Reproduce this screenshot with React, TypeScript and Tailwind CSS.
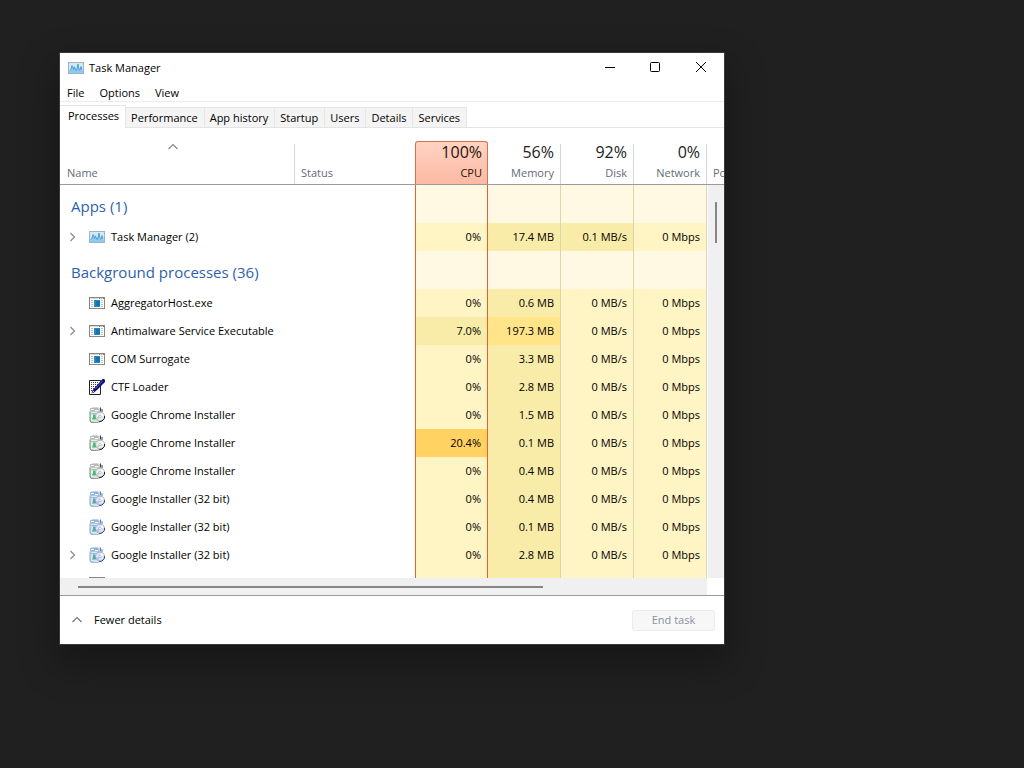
import { useState } from 'react'
import type { ReactNode } from 'react'
import clsx from 'clsx'

type IconName = 'taskmgr' | 'exe' | 'ctf' | 'chrome' | 'installer'

interface Process {
  name: string
  icon: IconName
  expandable?: boolean
  cpu: string
  memory: string
  disk: string
  network: string
}

const MENU = ['File', 'Options', 'View']
const TABS = ['Processes', 'Performance', 'App history', 'Startup', 'Users', 'Details', 'Services']

const APPS: Process[] = [
  { name: 'Task Manager (2)', icon: 'taskmgr', expandable: true, cpu: '0%', memory: '17.4 MB', disk: '0.1 MB/s', network: '0 Mbps' },
]

const BACKGROUND: Process[] = [
  { name: 'AggregatorHost.exe', icon: 'exe', cpu: '0%', memory: '0.6 MB', disk: '0 MB/s', network: '0 Mbps' },
  { name: 'Antimalware Service Executable', icon: 'exe', expandable: true, cpu: '7.0%', memory: '197.3 MB', disk: '0 MB/s', network: '0 Mbps' },
  { name: 'COM Surrogate', icon: 'exe', cpu: '0%', memory: '3.3 MB', disk: '0 MB/s', network: '0 Mbps' },
  { name: 'CTF Loader', icon: 'ctf', cpu: '0%', memory: '2.8 MB', disk: '0 MB/s', network: '0 Mbps' },
  { name: 'Google Chrome Installer', icon: 'chrome', cpu: '0%', memory: '1.5 MB', disk: '0 MB/s', network: '0 Mbps' },
  { name: 'Google Chrome Installer', icon: 'chrome', cpu: '20.4%', memory: '0.1 MB', disk: '0 MB/s', network: '0 Mbps' },
  { name: 'Google Chrome Installer', icon: 'chrome', cpu: '0%', memory: '0.4 MB', disk: '0 MB/s', network: '0 Mbps' },
  { name: 'Google Installer (32 bit)', icon: 'installer', cpu: '0%', memory: '0.4 MB', disk: '0 MB/s', network: '0 Mbps' },
  { name: 'Google Installer (32 bit)', icon: 'installer', cpu: '0%', memory: '0.1 MB', disk: '0 MB/s', network: '0 Mbps' },
  { name: 'Google Installer (32 bit)', icon: 'installer', expandable: true, cpu: '0%', memory: '2.8 MB', disk: '0 MB/s', network: '0 Mbps' },
]

function TaskManagerIcon() {
  return (
    <svg viewBox="0 0 16 16" className="size-4 shrink-0" aria-hidden="true">
      <rect x="0.5" y="2.5" width="15" height="11" fill="#d3e9f8" stroke="#9fb4c2" />
      <path d="M1 11 2.5 10 3.5 6 5 9 6 5 7.5 10 8.5 9 9.5 4 11 9 12 10 13 6 14 10 15 11V13H1Z" fill="#8ccaf0" />
      <path d="M1.5 10.5 3 9.5 4 5.5 5.5 9.5 6.5 7 8 10.5 9 9 10 4 11 9.5 12 10 13 6.5 14 10" fill="none" stroke="#4c9ad0" strokeWidth="0.9" />
    </svg>
  )
}

function ExeIcon() {
  return (
    <svg viewBox="0 0 16 16" className="size-4 shrink-0" shapeRendering="crispEdges" aria-hidden="true">
      <rect x="0" y="2" width="16" height="12" fill="#8b8780" />
      <rect x="1" y="3" width="14" height="10" fill="#ffffff" />
      <rect x="1" y="3" width="14" height="1" fill="#dedbd4" />
      <rect x="10" y="3" width="1" height="1" fill="#3c8fc4" />
      <rect x="12" y="3" width="1" height="1" fill="#d9a04a" />
      <rect x="14" y="3" width="1" height="1" fill="#d0603a" />
      <rect x="5" y="5" width="6" height="7" fill="#2a86c2" />
      <rect x="7" y="6" width="4" height="5" fill="#1473b4" />
      <path d="M2 5h2v1H2zM2 7h2v1H2zM2 9h2v1H2zM2 11h2v1H2zM12 5h2v1h-2zM12 7h2v1h-2zM12 9h2v1h-2zM12 11h2v1h-2z" fill="#b3c3cd" />
    </svg>
  )
}

function CtfIcon() {
  return (
    <svg viewBox="0 0 16 16" className="size-4 shrink-0" aria-hidden="true">
      <path d="M0.5 1.5H11.5V15.5H0.5Z" fill="#fff" stroke="#222" />
      <path
        d="M2 3h1v1H2zM4 3h1v1H4zM6 3h1v1H6zM8 3h1v1H8zM2 5h1v1H2zM4 5h1v1H4zM6 5h1v1H6zM8 5h1v1H8zM2 7h1v1H2zM4 7h1v1H4zM6 7h1v1H6zM2 9h1v1H2zM4 9h1v1H4zM2 11h1v1H2z"
        fill="#444"
      />
      <path d="M13.5 0H15L16 1V3L8 11 5 13.5 2.5 14.5 3.5 11.5 6 8.5Z" fill="#10107c" />
      <path d="M13.5 2 6.5 9.5" stroke="#4552b8" />
      <path d="M3.5 13.5 5 12" stroke="#ddd" />
    </svg>
  )
}

function SetupIcon({ tint }: { tint: 'green' | 'blue' }) {
  const green = tint === 'green'
  return (
    <svg viewBox="0 0 16 16" className="size-4 shrink-0" aria-hidden="true">
      <path d="M1 1 8 0 11 1V6L9 14 2 15 1 14Z" fill={green ? '#d5dcd8' : '#c2d8ee'} />
      <path d="M1 5H9V14H2Z" fill={green ? '#dff2e6' : '#d3e6f6'} />
      <path d="M1 4.5V13.5L2 15.3H9" fill="none" stroke={green ? '#59665e' : '#7892ad'} strokeWidth="0.8" />
      <path d="M1 1.5 4 0.5 9 0.7 10 4.5H1.5Z" fill={green ? '#b3bab6' : '#92b5da'} />
      <path d="M2 2.5H5M6 3.5H9" stroke="#fff" />
      <path d="M2 6.5H7" stroke={green ? '#8fb7a0' : '#8fb2d4'} strokeWidth="0.8" />
      <path d="M11.5 0.5V4.5M13 2V5" fill="none" stroke={green ? '#3b3f3d' : '#6682a6'} />
      <circle cx="11" cy="9.5" r="4.5" fill={green ? '#eceeed' : '#dbe3fa'} stroke={green ? '#8f9491' : '#8697bb'} strokeWidth="0.8" />
      <path d="M11 9.5 13 6 15 8.5Z" fill="#fff" />
      <path d="M11 9.5 7.5 11 9 13.3Z" fill={green ? '#c6ccc8' : '#a9b8ea'} />
      <circle cx="11" cy="9.5" r="1.2" fill="#fff" stroke="#9ba2ac" strokeWidth="0.6" />
      <path d="M15.5 9V11.5L13 14 9.5 15" fill="none" stroke={green ? '#222' : '#3f5577'} />
      <path d="M4 7.5H6V9.5L7.5 12.5H3L4 10Z" fill={green ? '#4bb87c' : '#58aa9c'} />
    </svg>
  )
}

const ICONS: Record<IconName, ReactNode> = {
  taskmgr: <TaskManagerIcon />,
  exe: <ExeIcon />,
  ctf: <CtfIcon />,
  chrome: <SetupIcon tint="green" />,
  installer: <SetupIcon tint="blue" />,
}

function Chevron({ up, className }: { up?: boolean; className?: string }) {
  return (
    <svg viewBox="0 0 10 10" className={clsx('size-[10px] shrink-0', className)} fill="none" stroke="currentColor" aria-hidden="true">
      <path d={up ? 'M0.5 7 5 2.5 9.5 7' : 'M2.5 1 6.5 5 2.5 9'} strokeWidth="1.2" />
    </svg>
  )
}

// Heat map shades, from idle to busy
function cpuHeat(value: string) {
  const n = parseFloat(value)
  if (n >= 20) return 'bg-[#ffd262]'
  if (n > 0) return 'bg-[#f9eca8]'
  return 'bg-[#fff4c4]'
}

function memoryHeat(value: string) {
  return parseFloat(value) >= 100 ? 'bg-[#ffe48a]' : 'bg-[#f9eca8]'
}

function diskHeat(value: string) {
  return parseFloat(value) > 0 ? 'bg-[#f9eca8]' : 'bg-[#fff4c4]'
}

const CPU_EDGE = 'border-l border-r border-l-[#e0622e] border-r-[#e0622e]'
const EDGE = 'border-r border-r-[#dcd5ae]'

function ProcessRow({ process }: { process: Process }) {
  return (
    <tr className="h-7">
      <td className="p-0">
        <div className="flex items-center pl-2">
          {process.expandable ? (
            <button type="button" aria-label={`Expand ${process.name}`} className="mr-[11px] text-[#888]">
              <Chevron />
            </button>
          ) : (
            <span className="w-[21px]" />
          )}
          {ICONS[process.icon]}
          <span className="ml-1.5 whitespace-nowrap">{process.name}</span>
        </div>
      </td>
      <td className="p-0" />
      <td className={clsx('p-0 pr-1.5 text-right', CPU_EDGE, cpuHeat(process.cpu))}>{process.cpu}</td>
      <td className={clsx('p-0 pr-1.5 text-right', EDGE, memoryHeat(process.memory))}>{process.memory}</td>
      <td className={clsx('p-0 pr-1.5 text-right', EDGE, diskHeat(process.disk))}>{process.disk}</td>
      <td className={clsx('p-0 pr-1.5 text-right bg-[#fff4c4]', EDGE)}>{process.network}</td>
      <td className="p-0" />
    </tr>
  )
}

function GroupRow({ title }: { title: string }) {
  return (
    <tr className="h-[38px]">
      <th scope="rowgroup" colSpan={2} className="p-0 pt-1 pl-[11px] text-left text-[15px] font-normal text-[#2f5fae]">
        {title}
      </th>
      <td className={clsx('bg-[#fff9e4]', CPU_EDGE)} />
      <td className={clsx('bg-[#fff9e4]', EDGE)} />
      <td className={clsx('bg-[#fff9e4]', EDGE)} />
      <td className={clsx('bg-[#fff9e4]', EDGE)} />
      <td className="p-0" />
    </tr>
  )
}

function UsageHeader({ value, label }: { value: string; label: string }) {
  return (
    <th scope="col" className="border-b border-[#9b9b9b] p-0 align-bottom font-normal">
      <div className="flex h-10 flex-col items-end border-r border-[#d5d5d5] pr-1.5">
        <span className="text-[16px] leading-4 text-[#222]">{value}</span>
        <span className="mt-[5px] leading-4">{label}</span>
      </div>
    </th>
  )
}

export default function App() {
  const [tab, setTab] = useState('Processes')

  return (
    <div className="h-screen bg-[#202020] pt-[53px] pr-[300px] pb-[124px] pl-[60px] font-['Open_Sans','Noto_Sans',sans-serif] text-[11px] leading-4 text-black">
      <main className="flex h-full flex-col overflow-hidden bg-white shadow-[0_0_0_1px_#383838,0_16px_36px_4px_rgba(0,0,0,0.3)]">
        <header className="flex h-[30px] shrink-0 items-center pl-2">
          <TaskManagerIcon />
          <h1 className="ml-[5px]">Task Manager</h1>
          <div className="ml-auto flex h-7 self-start text-black">
            <button type="button" aria-label="Minimize" className="grid w-11 place-items-center">
              <svg viewBox="0 0 12 12" className="size-3" stroke="currentColor"><path d="M1 6.5h10" /></svg>
            </button>
            <button type="button" aria-label="Maximize" className="grid w-[46px] place-items-center">
              <svg viewBox="0 0 12 12" className="size-3" fill="none" stroke="currentColor"><rect x="1.5" y="1.5" width="9" height="9" rx="1" /></svg>
            </button>
            <button type="button" aria-label="Close" className="grid w-[46px] place-items-center">
              <svg viewBox="0 0 12 12" className="size-3" stroke="currentColor"><path d="M1 1 11 11M11 1 1 11" /></svg>
            </button>
          </div>
        </header>

        <nav className="flex h-[19px] shrink-0 items-end gap-[15px] border-b border-[#ececec] pl-[7px]">
          {MENU.map((item) => (
            <button key={item} type="button">{item}</button>
          ))}
        </nav>

        <div role="tablist" className="flex h-[26px] shrink-0 items-end border-b border-[#e4e4e4]">
          {TABS.map((name) => (
            <button
              key={name}
              type="button"
              role="tab"
              aria-selected={tab === name}
              onClick={() => setTab(name)}
              className={clsx(
                'whitespace-nowrap border-t border-r border-[#e6e6e6] pr-1.5',
                tab === name ? '-mb-px h-[23px] bg-white pb-0.5 pl-2' : 'h-5 bg-[#f4f4f4] pl-[5px]'
              )}
            >
              {name}
            </button>
          ))}
        </div>

        <div className="relative min-h-0 flex-1 overflow-hidden">
          <table className="w-full table-fixed border-separate border-spacing-0">
            <colgroup>
              <col />
              <col className="w-[120px]" />
              <col className="w-[73px]" />
              <col className="w-[73px]" />
              <col className="w-[73px]" />
              <col className="w-[73px]" />
              <col className="w-[17px]" />
            </colgroup>
            <thead>
              <tr className="h-[57px] text-[#646b78]">
                <th scope="col" aria-sort="ascending" className="border-b border-[#9b9b9b] p-0 align-bottom font-normal">
                  <div className="flex h-10 flex-col border-r border-[#d5d5d5]">
                    <Chevron up className="-mt-0.5 mr-2 self-center text-[#888]" />
                    <span className="mt-[13px] pl-[7px] text-left">Name</span>
                  </div>
                </th>
                <th scope="col" className="border-b border-[#9b9b9b] p-0 pb-[3px] pl-1.5 text-left align-bottom font-normal">Status</th>
                <th scope="col" className="border-b border-[#9b9b9b] p-0 align-bottom font-normal">
                  <div className="flex h-[43px] flex-col items-end rounded-t-[3px] border border-b-0 border-[#d9714a] bg-linear-to-b from-[#ffd3c4] to-[#fcb9a2] pt-0.5 pr-[5px] text-[#2a1008]">
                    <span className="text-[16px] leading-4">100%</span>
                    <span className="mt-[5px]">CPU</span>
                  </div>
                </th>
                <UsageHeader value="56%" label="Memory" />
                <UsageHeader value="92%" label="Disk" />
                <UsageHeader value="0%" label="Network" />
                <th scope="col" className="border-b border-[#9b9b9b] p-0 pb-[3px] pl-1.5 text-left align-bottom font-normal whitespace-nowrap">
                  Po
                </th>
              </tr>
            </thead>
            <tbody>
              <GroupRow title="Apps (1)" />
              {APPS.map((process, i) => (
                <ProcessRow key={i} process={process} />
              ))}
              <GroupRow title="Background processes (36)" />
              {BACKGROUND.map((process, i) => (
                <ProcessRow key={i} process={process} />
              ))}
              <ProcessRow process={{ name: '', icon: 'exe', cpu: '', memory: '', disk: '', network: '' }} />
            </tbody>
          </table>

          {/* vertical scrollbar, laid over the last column */}
          <div className="absolute top-[57px] right-0 bottom-0 w-4 bg-[#f0f0f2] pt-[17px]">
            <div className="mx-auto h-[41px] w-0.5 bg-[#868686]" />
          </div>
        </div>

        <div className="flex h-[17px] shrink-0 pr-[17px]">
          <div className="flex flex-1 items-center bg-[#f0f0f0] pl-[18px]">
            <div className="h-0.5 w-[74%] bg-[#868686]" />
          </div>
        </div>

        <footer className="flex h-[49px] shrink-0 items-center border-t border-[#9b9b9b] pr-[9px] pl-3">
          <button type="button" className="flex items-center gap-3">
            <Chevron up className="text-[#777]" />
            Fewer details
          </button>
          <button type="button" disabled className="ml-auto h-[21px] w-[83px] rounded-[3px] border border-[#ebebeb] bg-[#f7f7f8] text-[#8a909c]">
            End task
          </button>
        </footer>
      </main>
    </div>
  )
}
